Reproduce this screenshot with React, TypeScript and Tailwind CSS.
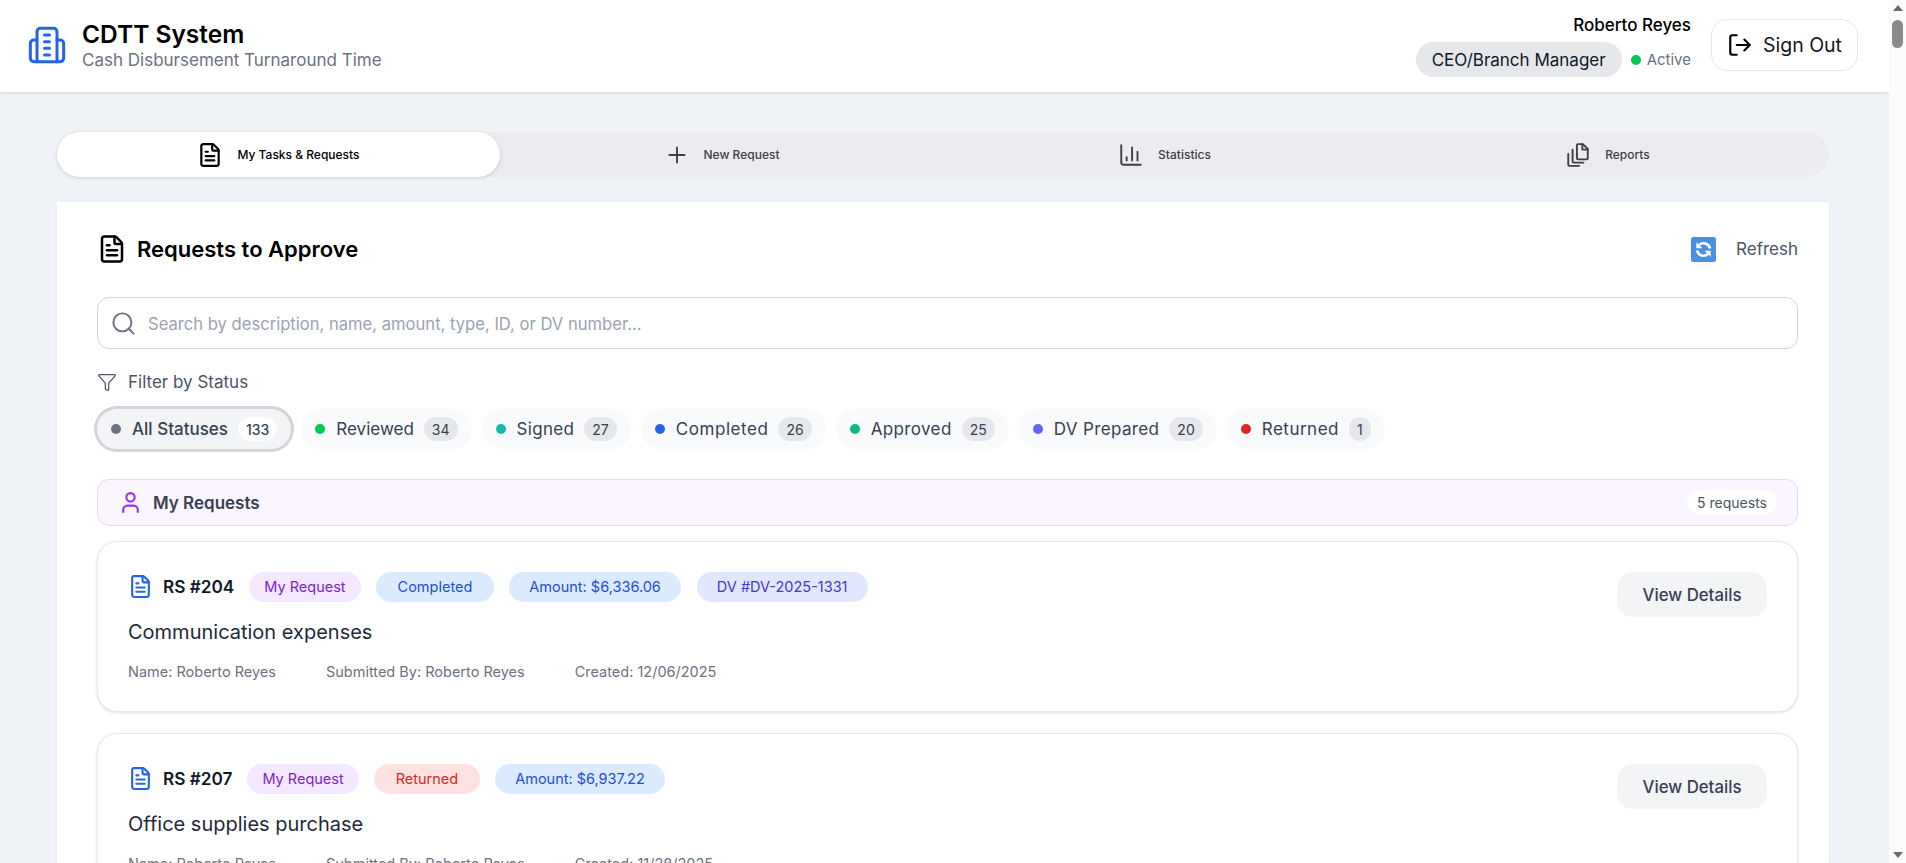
import { FileText, Plus, ChartColumn, Search, Funnel, User, LogOut } from "lucide-react";

function BuildingIcon({ className }: { className?: string }) {
  return (
    <svg width="40" height="40" viewBox="0 0 24 24" fill="none" stroke="currentColor" strokeWidth="1.8" strokeLinecap="round" strokeLinejoin="round" className={className}>
      <path d="M6 22V4a2 2 0 0 1 2-2h8a2 2 0 0 1 2 2v18Z" />
      <path d="M6 9H4a2 2 0 0 0-2 2v9a2 2 0 0 0 2 2h2" />
      <path d="M18 9h2a2 2 0 0 1 2 2v9a2 2 0 0 1-2 2h-2" />
      <path d="M10.5 6h3M10.5 10h3M10.5 14h3M10.5 18h3" />
    </svg>
  );
}

function ReportsIcon({ size, className }: { size?: number; className?: string }) {
  return (
    <svg width={size} height={size} viewBox="0 0 24 24" fill="none" stroke="currentColor" strokeWidth="1.75" strokeLinecap="round" strokeLinejoin="round" className={className}>
      <path d="M12 2h4.5L21 6.5V15a1 1 0 0 1-1 1h-8a1 1 0 0 1-1-1V3a1 1 0 0 1 1-1Z" />
      <path d="M16 2v5h5" />
      <path d="M7 7v11a1 1 0 0 0 1 1h9" />
      <path d="M3 11v10a1 1 0 0 0 1 1h9" />
    </svg>
  );
}

const tabs = [
  { label: "New Request", Icon: Plus },
  { label: "Statistics", Icon: ChartColumn },
  { label: "Reports", Icon: ReportsIcon },
];

const filters = [
  { label: "Reviewed", count: 34, dot: "bg-[#00c950]", track: "" },
  { label: "Signed", count: 27, dot: "bg-[#14b8a6]", track: "tracking-[0.33px]" },
  { label: "Completed", count: 26, dot: "bg-[#2563eb]", track: "tracking-[0.55px]" },
  { label: "Approved", count: 25, dot: "bg-[#10b981]", track: "tracking-[0.37px]" },
  { label: "DV Prepared", count: 20, dot: "bg-[#6366f1]", track: "tracking-[0.36px]" },
  { label: "Returned", count: 1, dot: "bg-[#dc2626]", track: "tracking-[0.5px]" },
];

const purple = "bg-[#f3e8ff] text-[#7e22ce] px-[15px]";
const blue = "bg-[#dbeafe] text-[#1d4ed8] px-5";
const blueWide = "bg-[#dbeafe] text-[#1d4ed8] px-[22px]";
const indigo = "bg-[#e0e7ff] text-[#4338ca] px-5 ml-px";
const red = "bg-[#fee2e2] text-[#dc2626] px-[22px]";

const cards = [
  {
    id: "RS #204",
    title: "Communication expenses",
    created: "12/06/2025",
    badges: [
      { t: "My Request", c: purple },
      { t: "Completed", c: blueWide },
      { t: "Amount: $6,336.06", c: blue },
      { t: "DV #DV-2025-1331", c: indigo },
    ],
  },
  {
    id: "RS #207",
    title: "Office supplies purchase",
    created: "11/28/2025",
    badges: [
      { t: "My Request", c: purple },
      { t: "Returned", c: red },
      { t: "Amount: $6,937.22", c: blue },
    ],
  },
];

function RefreshEmoji() {
  return (
    <svg width="25" height="25" viewBox="0 0 25 25" className="shrink-0">
      <rect x="0" y="0" width="25" height="25" rx="2.5" fill="#4a90e2" />
      <g transform="translate(25 0) scale(-1 1)">
        <path d="M6 11.5a6.6 6.6 0 0 1 11-3.4" fill="none" stroke="#fff" strokeWidth="2.6" />
        <path d="M19.6 5.2v6h-6z" fill="#fff" />
        <path d="M19 13.5a6.6 6.6 0 0 1-11 3.4" fill="none" stroke="#fff" strokeWidth="2.6" />
        <path d="M5.4 19.8v-6h6z" fill="#fff" />
      </g>
    </svg>
  );
}

export default function App() {
  return (
    <div className="flex h-[863px] w-full overflow-hidden bg-[#eff2f7] font-['Inter',sans-serif]">
      <div className="flex min-w-0 flex-1 flex-col overflow-hidden">
        <header className="flex h-[92px] shrink-0 items-center justify-between bg-white pb-[2px] pl-[27px] pr-[31px] shadow-[0_1px_3px_rgba(0,0,0,0.14)]">
          <div className="flex items-center gap-[15px]">
            <BuildingIcon className="text-[#2563eb]" />
            <div>
              <div className="text-[24.5px] leading-[30px] font-semibold text-black">CDTT System</div>
              <div className="text-[17px] leading-[22px] text-[#6b7280]">Cash Disbursement Turnaround Time</div>
            </div>
          </div>
          <div className="flex items-center gap-5">
            <div className="flex flex-col items-end gap-[5px]">
              <div className="text-[17px] leading-[24px] font-medium text-black">Roberto Reyes</div>
              <div className="flex items-center gap-[9px]">
                <span className="flex h-[35px] items-center rounded-full bg-[#e5e7eb] px-4 text-[17px] text-[#111827]">
                  <span className="mt-[2px]">CEO/Branch Manager</span>
                </span>
                <span className="flex items-center gap-[6px] text-[15px] text-[#6b7280]">
                  <span className="size-[10px] rounded-full bg-[#00c950]" />
                  <span className="mt-[2px]">Active</span>
                </span>
              </div>
            </div>
            <button className="flex h-[52px] w-[147px] items-center justify-center gap-[10px] rounded-2xl border border-[#e5e7eb] bg-white text-[19.5px] text-[#111827]">
              <LogOut size={26} strokeWidth={2} className="text-black" />
              <span className="mt-[2px]">Sign Out</span>
            </button>
          </div>
        </header>

        <main className="flex min-h-0 flex-1 flex-col pl-[57px] pr-[60px] pt-10">
          <nav className="grid h-[45px] shrink-0 grid-cols-4 rounded-full bg-[#ecebf0]">
            <div className="flex items-center justify-center gap-[14px] rounded-full bg-white text-[12px] font-medium text-black shadow-[0_1px_4px_rgba(0,0,0,0.15)]">
              <FileText size={26} strokeWidth={2} className="text-black" />
              My Tasks &amp; Requests
            </div>
            {tabs.map(({ label, Icon }) => (
              <div key={label} className="flex items-center justify-center gap-[14px] text-[12px] font-medium text-[#3f3f46]">
                <Icon size={26} strokeWidth={1.75} className="text-[#3f3f46]" />
                {label}
              </div>
            ))}
          </nav>

          <section className="mt-[25px] flex min-h-0 flex-1 flex-col overflow-hidden bg-white pl-10 pr-[31px] pt-[32px] shadow-[0_1px_3px_rgba(0,0,0,0.06)]">
            <div className="flex h-[30px] shrink-0 items-center justify-between">
              <div className="flex items-center gap-[10px]">
                <FileText size={30} strokeWidth={2} className="text-black" />
                <h2 className="text-[22px] font-semibold text-black">Requests to Approve</h2>
              </div>
              <div className="flex items-center gap-[20px] text-[17px] text-[#4b5563]">
                <RefreshEmoji />
                <span className="mt-[2px]">Refresh</span>
              </div>
            </div>

            <div className="mt-[33px] flex h-[52px] shrink-0 items-center gap-[11px] rounded-xl border border-[#d1d5db] bg-white pl-[12px]">
              <Search size={27} strokeWidth={1.75} className="text-[#6b7280]" />
              <span className="mt-[2px] text-[16.6px] text-[#9ca3af]">Search by description, name, amount, type, ID, or DV number...</span>
            </div>

            <div className="mt-[21px] flex h-[24px] shrink-0 items-center gap-[11px] text-[17px] text-[#4b5563]">
              <Funnel size={20} strokeWidth={1.5} className="text-[#4b5563]" />
              <span className="mt-[2px]">Filter by Status</span>
            </div>

            <div className="mt-[15px] flex h-[40px] shrink-0 items-center gap-[10px]">
              <div className="flex h-[40px] items-center rounded-full bg-[#f3f4f6] px-[14px] text-[17px] font-medium text-[#374151] ring-[3px] ring-[#d1d5db]">
                <span className="size-[10px] rounded-full bg-[#6b7280]" />
                <span className="ml-[11px] mr-[10px] mt-[2px]">All Statuses</span>
                <span className="flex h-[24px] items-center rounded-full bg-white px-2 text-[14px]">133</span>
              </div>
              {filters.map((f) => (
                <div key={f.label} className="flex h-[40px] items-center rounded-full bg-[#f9fafb] px-[14px] text-[17px] text-[#374151]">
                  <span className={`size-[10px] rounded-full ${f.dot}`} />
                  <span className={`ml-[11px] mr-[10px] mt-[2px] ${f.track}`}>{f.label}</span>
                  <span className="flex h-[24px] items-center rounded-full bg-[#e5e7eb] px-2 text-[14px]">{f.count}</span>
                </div>
              ))}
            </div>

            <div className="mt-[30px] flex h-[47px] shrink-0 items-center justify-between rounded-xl border border-[#e9d5ff] bg-[#faf5ff] pl-[20px] pr-[20px]">
              <div className="flex items-center gap-[10px] text-[17px] font-semibold text-[#374151]">
                <User size={25} strokeWidth={2} className="text-[#9333ea]" />
                <span className="mt-[2px]">My Requests</span>
              </div>
              <span className="flex h-[25px] items-center rounded-full bg-white px-[10px] text-[14px] text-[#4b5563]">5 requests</span>
            </div>

            <div className="mt-[15px] flex flex-col gap-[21px]">
              {cards.map((c) => (
                <article key={c.id} className="flex h-[171px] shrink-0 items-start justify-between rounded-[20px] border border-[#e5e7eb] bg-white p-[30px] shadow-[0_1px_3px_rgba(0,0,0,0.12)]">
                  <div>
                    <div className="flex h-[30px] items-center gap-[15px]">
                      <div className="flex items-center gap-[10px]">
                        <FileText size={25} strokeWidth={2} className="text-[#2563eb]" />
                        <span className="text-[17.2px] font-semibold text-[#111827]">{c.id}</span>
                      </div>
                      {c.badges.map((b) => (
                        <span key={b.t} className={`flex h-[30px] items-center rounded-full text-[14.5px] ${b.c}`}>{b.t}</span>
                      ))}
                    </div>
                    <div className="mt-[16px] text-[20px] leading-[28px] text-[#1f2937]">{c.title}</div>
                    <div className="mt-[16px] flex gap-[50px] text-[14.5px] leading-[20px] text-[#6b7280]">
                      <span>Name: Roberto Reyes</span>
                      <span>Submitted By: Roberto Reyes</span>
                      <span>Created: {c.created}</span>
                    </div>
                  </div>
                  <button className="h-[45px] w-[150px] rounded-2xl bg-[#f3f4f6] pt-[2px] text-[16.8px] font-medium text-[#374151]">View Details</button>
                </article>
              ))}
            </div>
          </section>
        </main>
      </div>

      <aside className="relative w-[17px] shrink-0 bg-[#fcfcfc]">
        <span className="absolute left-[4px] top-[5px] border-x-[5px] border-b-[6px] border-x-transparent border-b-[#6b6b6b]" />
        <span className="absolute left-[3px] top-[20px] h-[28px] w-[11px] rounded-full bg-[#8a8a8a]" />
        <span className="absolute bottom-[5px] left-[4px] border-x-[5px] border-t-[6px] border-x-transparent border-t-[#6b6b6b]" />
      </aside>
    </div>
  );
}
